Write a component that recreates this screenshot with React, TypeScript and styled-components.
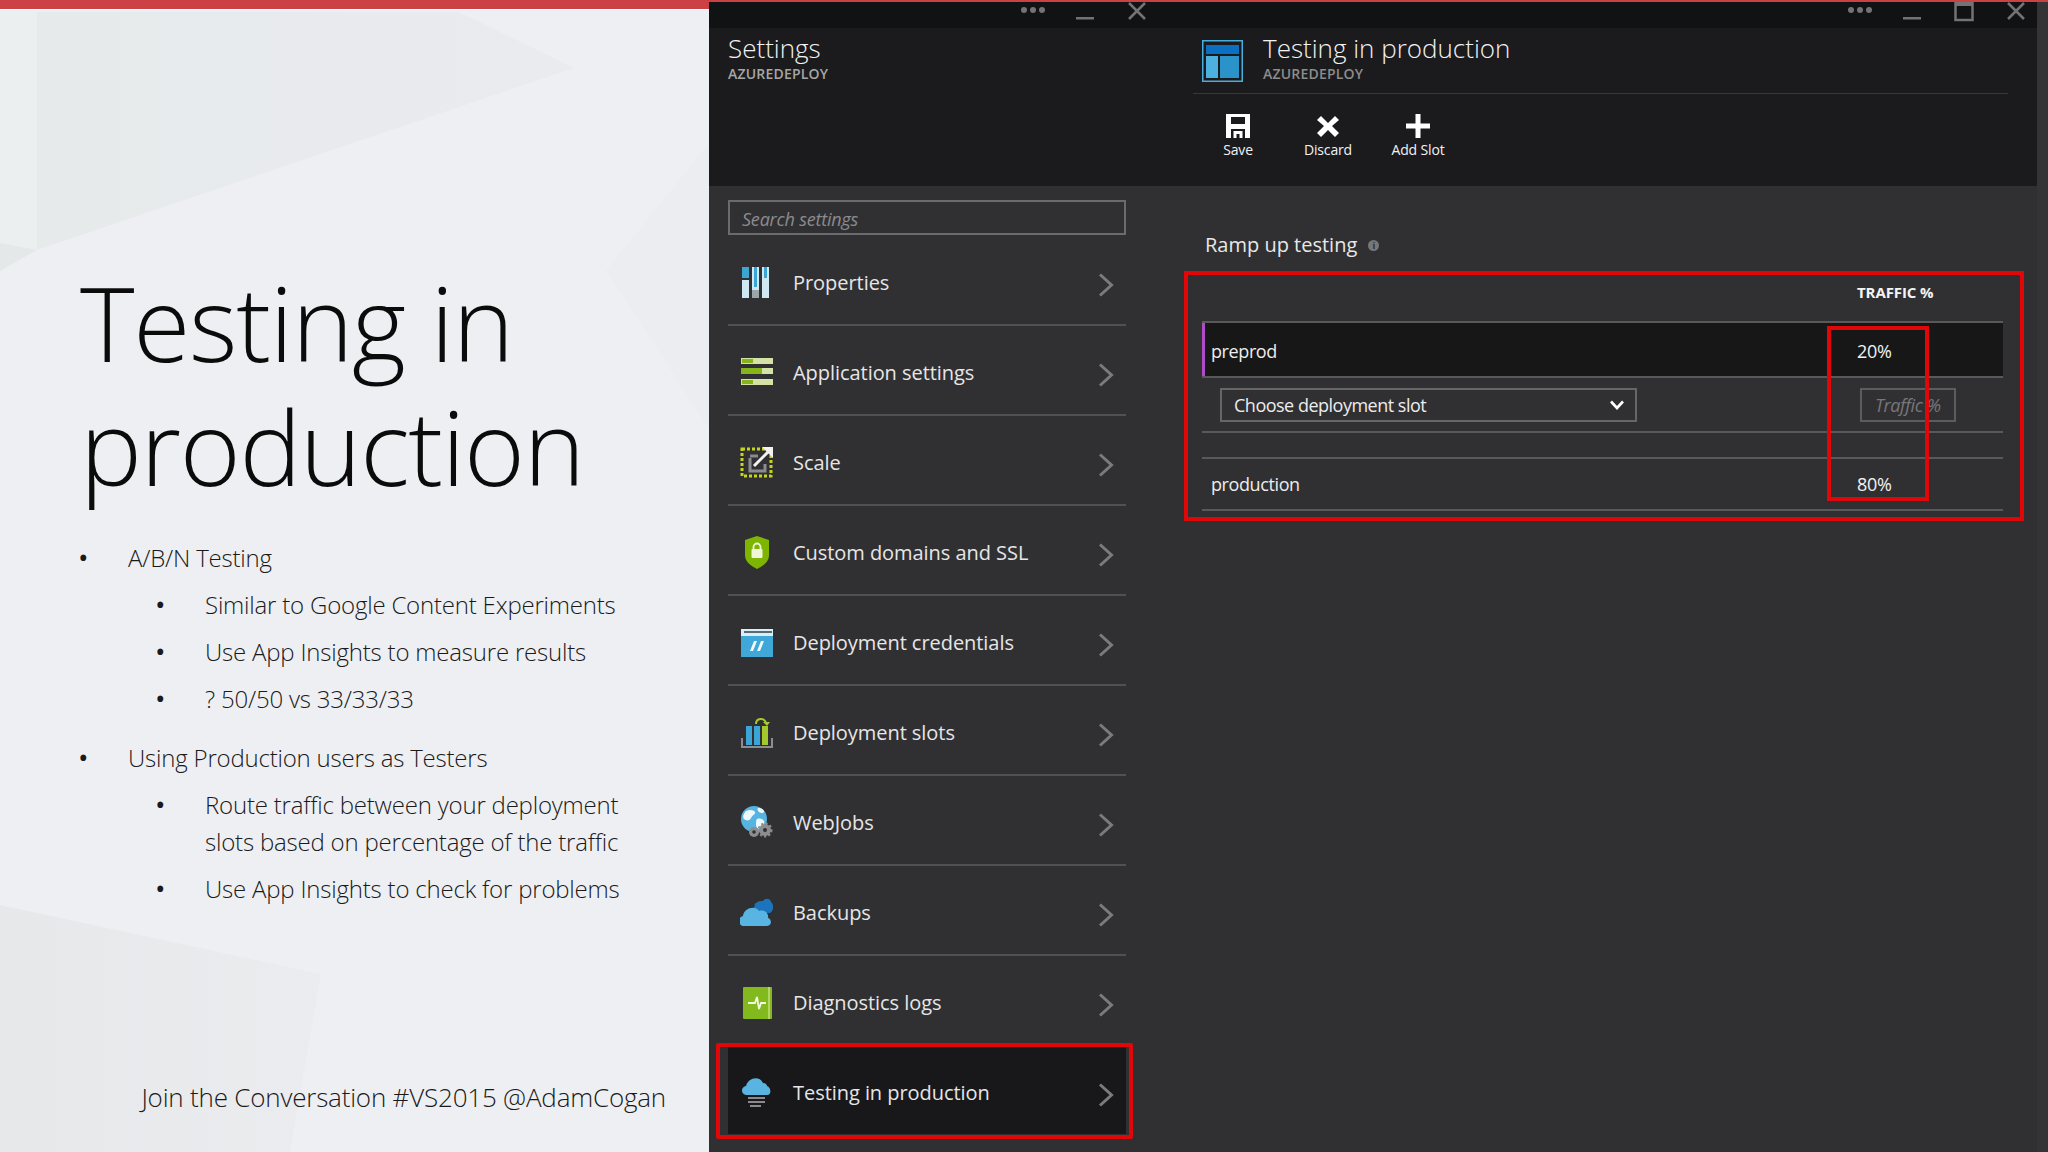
import { ReactNode } from "react";
import styled, { createGlobalStyle } from "styled-components";

const GlobalStyle = createGlobalStyle`
    html, body {
        margin: 0;
        padding: 0;
        background: #303033;
    }
    * {
        box-sizing: border-box;
    }
`

const PropertiesIcon = () => (
    <svg width="33" height="33" viewBox="0 0 33 33">
        <rect x="2" y="1" width="7" height="31" fill="#cfe8f1"/>
        <rect x="2" y="1" width="7" height="11" fill="#3ba6d6"/>
        <rect x="2" y="12" width="7" height="2" fill="#303033"/>
        <rect x="12" y="1" width="7" height="31" fill="#cfe8f1"/>
        <rect x="14" y="1" width="3" height="20" fill="#3ba6d6"/>
        <rect x="12" y="24" width="7" height="8" fill="#9aa6a9"/>
        <rect x="22" y="1" width="7" height="31" fill="#cfe8f1"/>
        <rect x="24" y="1" width="3" height="11" fill="#3ba6d6"/>
    </svg>
)

const AppSettingsIcon = () => (
    <svg width="33" height="33" viewBox="0 0 33 33">
        <rect x="1" y="2" width="32" height="6" fill="#d4e2a8"/>
        <rect x="2" y="3" width="11" height="4" fill="#86b51b"/>
        <rect x="1" y="12" width="32" height="6" fill="#d4e2a8"/>
        <rect x="1" y="12" width="21" height="6" fill="#86b51b"/>
        <rect x="1" y="23" width="32" height="6" fill="#d4e2a8"/>
        <rect x="2" y="24" width="11" height="4" fill="#86b51b"/>
    </svg>
)

const ScaleIcon = () => (
    <svg width="33" height="33" viewBox="0 0 33 33" fill="none">
        <rect x="2" y="3" width="29" height="27" stroke="#c3d51e" strokeWidth="3" strokeDasharray="3 2"/>
        <path d="M10 12v13h15v-7" stroke="#8b8b8d" strokeWidth="3"/>
        <path d="M10 10h8" stroke="#8b8b8d" strokeWidth="3"/>
        <path d="M14 20 28 6" stroke="#f2f2f2" strokeWidth="3"/>
        <path d="M22 1h11v11z" fill="#f2f2f2"/>
    </svg>
)

const ShieldIcon = () => (
    <svg width="33" height="33" viewBox="0 0 33 33">
        <path d="M17 0 29 4v15c0 7-6 11-12 14C11 30 5 26 5 19V4z" fill="#7db500"/>
        <rect x="11.5" y="13" width="11" height="9" rx="1" fill="#eef5d8"/>
        <path d="M13.5 13v-2a3.500 3.500 0 0 1 7 0v2" fill="none" stroke="#eef5d8" strokeWidth="1.800"/>
    </svg>
)

const CredentialsIcon = () => (
    <svg width="33" height="33" viewBox="0 0 33 33">
        <rect x="1" y="3" width="32" height="28" fill="#3fa8d8"/>
        <rect x="1" y="3" width="32" height="7" fill="#d9eef7"/>
        <rect x="4" y="5" width="28" height="2" fill="#5a6a72"/>
        <path d="M14 15h3l-4 10h-3zM21 15h3l-4 10h-3z" fill="#f3fafd"/>
    </svg>
)

const SlotsIcon = () => (
    <svg width="33" height="33" viewBox="0 0 33 33" fill="none">
        <rect x="6" y="10" width="6" height="19" fill="#3ba6d6"/>
        <rect x="14" y="10" width="6" height="19" fill="#3ba6d6"/>
        <rect x="22" y="10" width="6" height="19" fill="#a4c92c"/>
        <path d="M16 8c0-6 8-7 10-1" stroke="#a4c92c" strokeWidth="2"/>
        <path d="M23 6h7l-3 4z" fill="#a4c92c"/>
        <path d="M2 22v9h30v-9" stroke="#8d8d90" strokeWidth="2"/>
    </svg>
)

const WebJobsIcon = () => (
    <svg width="33" height="33" viewBox="0 0 33 33">
        <circle cx="14" cy="13" r="13" fill="#57b3e0"/>
        <path d="M6 5c4-2 8-1 9 1s-3 3-4 6-5 3-7 1 0-6 2-8zM17 13c3-1 6 0 7 2s-1 5-3 7-5 0-5-3 0-5 1-6zM19 2c2 0 4 1 5 3s-3 3-5 1-2-4 0-4z" fill="#eef8fc"/>
        <circle cx="14" cy="26" r="5" fill="#8d8d90"/>
        <circle cx="14" cy="26" r="1.800" fill="#303033"/>
        <circle cx="25" cy="24" r="6" fill="#8d8d90" stroke="#8d8d90" strokeDasharray="2 2" strokeWidth="3"/>
        <circle cx="25" cy="24" r="2" fill="#303033"/>
    </svg>
)

const BackupsIcon = () => (
    <svg width="33" height="33" viewBox="0 0 33 33">
        <path d="M14 14a8 8 0 0 1 9-9c2-3 7-3 8 1 3 2 3 9-1 11H18z" fill="#1c75bc"/>
        <path d="M15 9c2-2 5-3 8-2" fill="none" stroke="#1c75bc" strokeWidth="2"/>
        <path d="M5 30a5 5 0 0 1-2-10c1-8 12-11 16-5 6-2 10 3 9 7 4 1 4 8-1 8z" fill="#59b4e2"/>
    </svg>
)

const DiagnosticsIcon = () => (
    <svg width="33" height="33" viewBox="0 0 33 33">
        <rect x="3" y="1" width="29" height="32" rx="1" fill="#82b91c"/>
        <rect x="28" y="1" width="2" height="32" fill="#b4d566"/>
        <path d="M8 17h7l2-6 2 12 2-6h5" fill="none" stroke="#f2f8e2" strokeWidth="1.800"/>
    </svg>
)

const TestingIcon = () => (
    <svg width="33" height="33" viewBox="0 0 33 33">
        <path d="M7 19a4.500 4.500 0 0 1-1-9c2-8 13-11 17-3 3 0 4 2 4 3 4 1 5 9 0 9z" fill="#59b4e2"/>
        <rect x="8" y="21" width="17" height="2" fill="#8a8a8c"/>
        <rect x="8" y="25" width="17" height="2" fill="#8a8a8c"/>
        <rect x="10" y="29" width="11" height="2" fill="#8a8a8c"/>
    </svg>
)

const BladeIcon = () => (
    <svg width="41" height="42" viewBox="0 0 41 42">
        <rect x="0.750" y="0.750" width="39.500" height="40.500" fill="none" stroke="#48aedd" strokeWidth="1.500"/>
        <rect x="4" y="5" width="33" height="9" fill="#0b6fc2"/>
        <rect x="4" y="16" width="12" height="22" fill="#4cb1df"/>
        <rect x="18" y="16" width="19" height="22" fill="#2a93ca"/>
    </svg>
)

const Chevron = () => (
    <ChevronMark width="16" height="24" viewBox="0 0 16 24" fill="none">
        <path d="M2 1.500 13.500 12 2 22.500" stroke="#7b7b7d" strokeWidth="3"/>
    </ChevronMark>
)

const WindowControls = ({maximize}: {maximize?: boolean}) => (
    <Controls $right={maximize ? 11 : 23}>
        <Dots><i/><i/><i/></Dots>
        <svg width="20" height="20" viewBox="0 0 20 20"><rect x="1" y="15" width="18" height="2.500" fill="#737375"/></svg>
        {maximize && (
            <svg width="20" height="20" viewBox="0 0 20 20" fill="none">
                <rect x="1.500" y="-2" width="17" height="20" stroke="#737375" strokeWidth="2.500"/>
                <rect x="1.500" y="-2" width="17" height="6" fill="#737375"/>
            </svg>
        )}
        <svg width="20" height="20" viewBox="0 0 20 20" fill="none">
            <path d="M2 1 18 17M18 1 2 17" stroke="#737375" strokeWidth="2.500"/>
        </svg>
    </Controls>
)

const settingsItems: {title: string; icon: ReactNode}[] = [
    {title: "Properties", icon: <PropertiesIcon/>},
    {title: "Application settings", icon: <AppSettingsIcon/>},
    {title: "Scale", icon: <ScaleIcon/>},
    {title: "Custom domains and SSL", icon: <ShieldIcon/>},
    {title: "Deployment credentials", icon: <CredentialsIcon/>},
    {title: "Deployment slots", icon: <SlotsIcon/>},
    {title: "WebJobs", icon: <WebJobsIcon/>},
    {title: "Backups", icon: <BackupsIcon/>},
    {title: "Diagnostics logs", icon: <DiagnosticsIcon/>},
    {title: "Testing in production", icon: <TestingIcon/>},
]

const bullets: {text: ReactNode; level: number; first?: boolean}[] = [
    {text: "A/B/N Testing", level: 1, first: true},
    {text: "Similar to Google Content Experiments", level: 2},
    {text: "Use App Insights to measure results", level: 2},
    {text: "? 50/50 vs 33/33/33", level: 2},
    {text: "Using Production users as Testers", level: 1},
    {text: <>Route traffic between your deployment<br/>slots based on percentage of the traffic</>, level: 2},
    {text: "Use App Insights to check for problems", level: 2},
]

export default function App() {
    return (
        <Page>
            <GlobalStyle/>
            <Slide>
                <SlideArt viewBox="0 0 709 1152" preserveAspectRatio="none">
                    <defs>
                        <linearGradient id="topFacet" x1="0" y1="0" x2="1" y2="0">
                            <stop offset="0" stopColor="#e7eaeb"/>
                            <stop offset="1" stopColor="#e9ebef"/>
                        </linearGradient>
                        <linearGradient id="bottomFacet" x1="0" y1="0" x2="1" y2="0">
                            <stop offset="0" stopColor="#e7e8ea"/>
                            <stop offset="1" stopColor="#ebecef"/>
                        </linearGradient>
                    </defs>
                    <polygon points="37,12 459,12 574,68 37,250" fill="url(#topFacet)"/>
                    <polygon points="0,12 37,12 37,250 0,243" fill="#ebeff0"/>
                    <polygon points="0,243 37,250 0,271" fill="#e5e8e9"/>
                    <polygon points="709,143 606,271 709,428" fill="#ebedf1"/>
                    <polygon points="0,905 321,974 290,1152 0,1152" fill="url(#bottomFacet)"/>
                </SlideArt>
                <RedBar/>
                <SlideTitle>Testing in<br/>production</SlideTitle>
                <BulletList>
                    {bullets.map((b, i) => (
                        <Bullet key={i} $level={b.level} $gap={b.first ? 0 : b.level === 1 ? 22 : 10}>{b.text}</Bullet>
                    ))}
                </BulletList>
                <SlideFooter>Join the Conversation #VS2015 @AdamCogan</SlideFooter>
            </Slide>

            <SettingsPanel>
                <TitleBar><WindowControls/></TitleBar>
                <SettingsHeader>
                    <BladeTitle>Settings</BladeTitle>
                    <BladeSubtitle>AZUREDEPLOY</BladeSubtitle>
                </SettingsHeader>
                <SettingsBody>
                    <SearchBox>Search settings</SearchBox>
                    {settingsItems.map((item, i) => (
                        <SettingRow key={item.title} $selected={i === settingsItems.length - 1}>
                            <RowIcon>{item.icon}</RowIcon>
                            <RowLabel>{item.title}</RowLabel>
                            <Chevron/>
                        </SettingRow>
                    ))}
                </SettingsBody>
            </SettingsPanel>

            <DetailPanel>
                <TitleBar $inset><WindowControls maximize/></TitleBar>
                <DetailHeader>
                    <DetailTitleRow>
                        <BladeIcon/>
                        <div>
                            <BladeTitle>Testing in production</BladeTitle>
                            <BladeSubtitle $dim>AZUREDEPLOY</BladeSubtitle>
                        </div>
                    </DetailTitleRow>
                    <Commands>
                        <Command>
                            <svg width="26" height="26" viewBox="0 0 26 26">
                                <path fillRule="evenodd" fill="#fff" d="M1 1h24v24h-5v-9H6v9H1zM6 4v7h14V4zM8.500 18h9v7h-3v-4h-3v4h-3z"/>
                            </svg>
                            Save
                        </Command>
                        <Command>
                            <svg width="26" height="26" viewBox="0 0 26 26">
                                <path fill="#fff" d="M6 3 13 10 20 3 24 7 17 13 24 20 20 24 13 17 6 24 2 20 9 13 2 7z"/>
                            </svg>
                            Discard
                        </Command>
                        <Command>
                            <svg width="26" height="26" viewBox="0 0 26 26">
                                <path fill="#fff" d="M10.500 1h5v9.500H25v5h-9.500V25h-5v-9.500H1v-5h9.500z"/>
                            </svg>
                            Add Slot
                        </Command>
                    </Commands>
                </DetailHeader>
                <DetailBody>
                    <SectionTitle>
                        Ramp up testing
                        <InfoDot>i</InfoDot>
                    </SectionTitle>
                    <TrafficFrame>
                        <TrafficHeader>TRAFFIC %</TrafficHeader>
                        <SlotRow $active>
                            <SlotName>preprod</SlotName>
                            <SlotValue>20%</SlotValue>
                        </SlotRow>
                        <AddRow>
                            <SlotSelect>
                                Choose deployment slot
                                <svg width="16" height="12" viewBox="0 0 16 12" fill="none">
                                    <path d="M2 2.500 8 9l6-6.500" stroke="#fff" strokeWidth="2.600"/>
                                </svg>
                            </SlotSelect>
                            <TrafficInput>Traffic %</TrafficInput>
                        </AddRow>
                        <SpacerRow/>
                        <SlotRow>
                            <SlotName>production</SlotName>
                            <SlotValue>80%</SlotValue>
                        </SlotRow>
                        <ValueHighlight/>
                    </TrafficFrame>
                </DetailBody>
            </DetailPanel>
        </Page>
    );
}

const UI_FONT = `"Open Sans", "Noto Sans", sans-serif`

const Page = styled.div`
    width: 2048px;
    height: 1152px;
    display: flex;
    overflow: hidden;
    font-family: ${UI_FONT};
`

const Slide = styled.section`
    position: relative;
    flex: 0 0 709px;
    display: flex;
    flex-direction: column;
    background: #eeeff3;
    color: #111;
`

const SlideArt = styled.svg`
    position: absolute;
    inset: 0;
    width: 100%;
    height: 100%;
`

const RedBar = styled.div`
    position: relative;
    height: 9px;
    background: #cb4146;
    flex: none;
    box-shadow: 0 1px 0 #fff;
`

const SlideTitle = styled.h1`
    position: relative;
    margin: 251px 0 0 80px;
    font-weight: 300;
    font-size: 104px;
    line-height: 124px;
    letter-spacing: -1.300px;
    color: #0b0b0b;
`

const BulletList = styled.ul`
    position: relative;
    list-style: none;
    margin: 31px 0 0;
    padding: 0;
`

const Bullet = styled.li<{$level: number; $gap: number}>`
    display: flex;
    margin-top: ${p => p.$gap}px;
    margin-left: ${p => (p.$level === 1 ? 78 : 155)}px;
    font-weight: 300;
    font-size: 24px;
    line-height: 37px;
    letter-spacing: -0.200px;
    white-space: nowrap;
    color: #1a1a1a;

    &::before {
        content: "•";
        flex: 0 0 50px;
        font-size: 28px;
        font-weight: 400;
        line-height: 37px;
    }
`

const SlideFooter = styled.div`
    position: relative;
    margin-top: auto;
    padding: 0 43px 36px 0;
    text-align: right;
    font-weight: 300;
    font-size: 26px;
    line-height: 38px;
    letter-spacing: -0.200px;
    color: #1a1a1a;
`

const SettingsPanel = styled.section`
    flex: 0 0 461px;
    display: flex;
    flex-direction: column;
    border-top: 2px solid #cb4146;
`

const DetailPanel = styled.section`
    flex: 1;
    display: flex;
    flex-direction: column;
    border-top: 2px solid #cb4146;
    background: #343436;
`

const TitleBar = styled.div<{$inset?: boolean}>`
    flex: none;
    height: 26px;
    margin-right: ${p => (p.$inset ? 11 : 0)}px;
    background: #111214;
    overflow: hidden;
`

const Controls = styled.div<{$right: number}>`
    height: 100%;
    display: flex;
    justify-content: flex-end;
    gap: 32px;
    padding-right: ${p => p.$right}px;
`

const Dots = styled.div`
    display: flex;
    gap: 3px;
    align-items: center;
    height: 16px;
    margin-right: -2px;

    i {
        width: 6px;
        height: 6px;
        border-radius: 50%;
        background: #737375;
    }
`

const SettingsHeader = styled.header`
    flex: none;
    height: 158px;
    padding: 3px 0 0 19px;
    background: #1b1b1d;
`

const BladeTitle = styled.div`
    font-weight: 300;
    font-size: 26px;
    line-height: 34px;
    color: #f2f2f2;
`

const BladeSubtitle = styled.div<{$dim?: boolean}>`
    font-size: 14px;
    line-height: 18px;
    font-weight: 600;
    letter-spacing: 0.200px;
    color: ${p => (p.$dim ? "#8c8c8c" : "#a6a6a6")};
`

const SettingsBody = styled.div`
    flex: 1;
    padding: 14px 44px 0 19px;
    background: #303033;
`

const SearchBox = styled.div`
    height: 35px;
    margin-bottom: 1px;
    padding: 2px 0 0 12px;
    border: 2px solid #6b6b6d;
    font-style: italic;
    font-size: 18px;
    line-height: 31px;
    letter-spacing: -0.200px;
    color: #8b8b8d;
`

const ChevronMark = styled.svg`
    flex: none;
    margin-top: 5px;
`

const SettingRow = styled.div<{$selected?: boolean}>`
    position: relative;
    height: ${p => (p.$selected ? "87px" : "90px")};
    margin-top: ${p => (p.$selected ? 1 : 0)}px;
    display: flex;
    align-items: center;
    padding: ${p => (p.$selected ? "3px 12px 0" : "5px 12px 0")};
    border-bottom: ${p => (p.$selected ? "none" : "2px solid #515153")};
    background: ${p => (p.$selected ? "#18181a" : "none")};

    ${p => p.$selected && `
        &::after {
            content: "";
            position: absolute;
            inset: -4px -7px -5px -12px;
            border: 4px solid #df0707;
            border-radius: 2px;
        }
    `}
`

const RowIcon = styled.div`
    flex: 0 0 33px;
    height: 33px;
    margin-right: 20px;
`

const RowLabel = styled.div`
    flex: 1;
    font-size: 20px;
    letter-spacing: -0.050px;
    color: #e6e6e6;
`

const DetailHeader = styled.header`
    flex: none;
    height: 158px;
    margin-right: 11px;
    padding: 0 29px 0 23px;
    background: #1b1b1d;
`

const DetailTitleRow = styled.div`
    height: 66px;
    display: flex;
    gap: 20px;
    padding: 3px 0 0 9px;
    border-bottom: 1px solid #38383a;

    svg {
        margin-top: 9px;
    }
`

const Commands = styled.div`
    display: flex;
    padding-top: 19px;
`

const Command = styled.div`
    width: 90px;
    display: flex;
    flex-direction: column;
    align-items: center;
    gap: 2px;
    font-size: 14px;
    line-height: 18px;
    letter-spacing: -0.150px;
    color: #f2f2f2;
`

const DetailBody = styled.div`
    flex: 1;
    margin-right: 11px;
    padding: 45px 0 0 14px;
    background: #303033;
`

const SectionTitle = styled.div`
    display: flex;
    align-items: center;
    gap: 11px;
    margin-left: 21px;
    font-size: 20px;
    line-height: 28px;
    color: #e8e8e8;
`

const InfoDot = styled.span`
    width: 11px;
    height: 11px;
    border-radius: 50%;
    background: #77777a;
    color: #303033;
    font-size: 9px;
    font-weight: 700;
    line-height: 11px;
    text-align: center;
`

const TrafficFrame = styled.div`
    position: relative;
    width: 840px;
    height: 250px;
    margin-top: 12px;
    padding: 0 17px 0 14px;
    border: 4px solid #df0707;
`

const TrafficHeader = styled.div`
    height: 46px;
    padding: 8px 0 0 655px;
    font-size: 15px;
    line-height: 19px;
    font-weight: 700;
    letter-spacing: -0.100px;
    color: #f4f4f4;
`

const SlotRow = styled.div<{$active?: boolean}>`
    display: grid;
    grid-template-columns: 1fr 146px;
    align-items: center;
    height: ${p => (p.$active ? 57 : 54)}px;
    padding: ${p => (p.$active ? 3 : 0)}px 0 0 9px;
    border-top: 2px solid #59595b;
    border-bottom: 2px solid #59595b;
    background: ${p => (p.$active ? "#171718" : "none")};
    box-shadow: ${p => (p.$active ? "inset 3px 0 0 #b04ac8" : "none")};
`

const SlotName = styled.div`
    font-size: 18px;
    letter-spacing: -0.400px;
    color: #ededed;
`

const SlotValue = styled.div`
    font-size: 18px;
    letter-spacing: -0.300px;
    color: #f2f2f2;
`

const AddRow = styled.div`
    display: grid;
    grid-template-columns: 417px 96px;
    justify-content: space-between;
    align-items: center;
    height: 55px;
    padding: 0 47px 0 18px;
    border-bottom: 2px solid #59595b;
`

const SlotSelect = styled.div`
    height: 34px;
    display: flex;
    align-items: center;
    justify-content: space-between;
    padding: 1px 10px 0 12px;
    border: 2px solid #666668;
    font-size: 18px;
    letter-spacing: -0.500px;
    color: #ececec;
`

const TrafficInput = styled.div`
    height: 34px;
    padding-left: 13px;
    border: 2px solid #5c5c5e;
    font-style: italic;
    font-size: 18px;
    line-height: 30px;
    letter-spacing: -0.400px;
    white-space: nowrap;
    color: #77777a;
`

const SpacerRow = styled.div`
    height: 24px;
`

const ValueHighlight = styled.div`
    position: absolute;
    left: 639px;
    top: 51px;
    width: 102px;
    height: 175px;
    border: 4px solid #df0707;
`
